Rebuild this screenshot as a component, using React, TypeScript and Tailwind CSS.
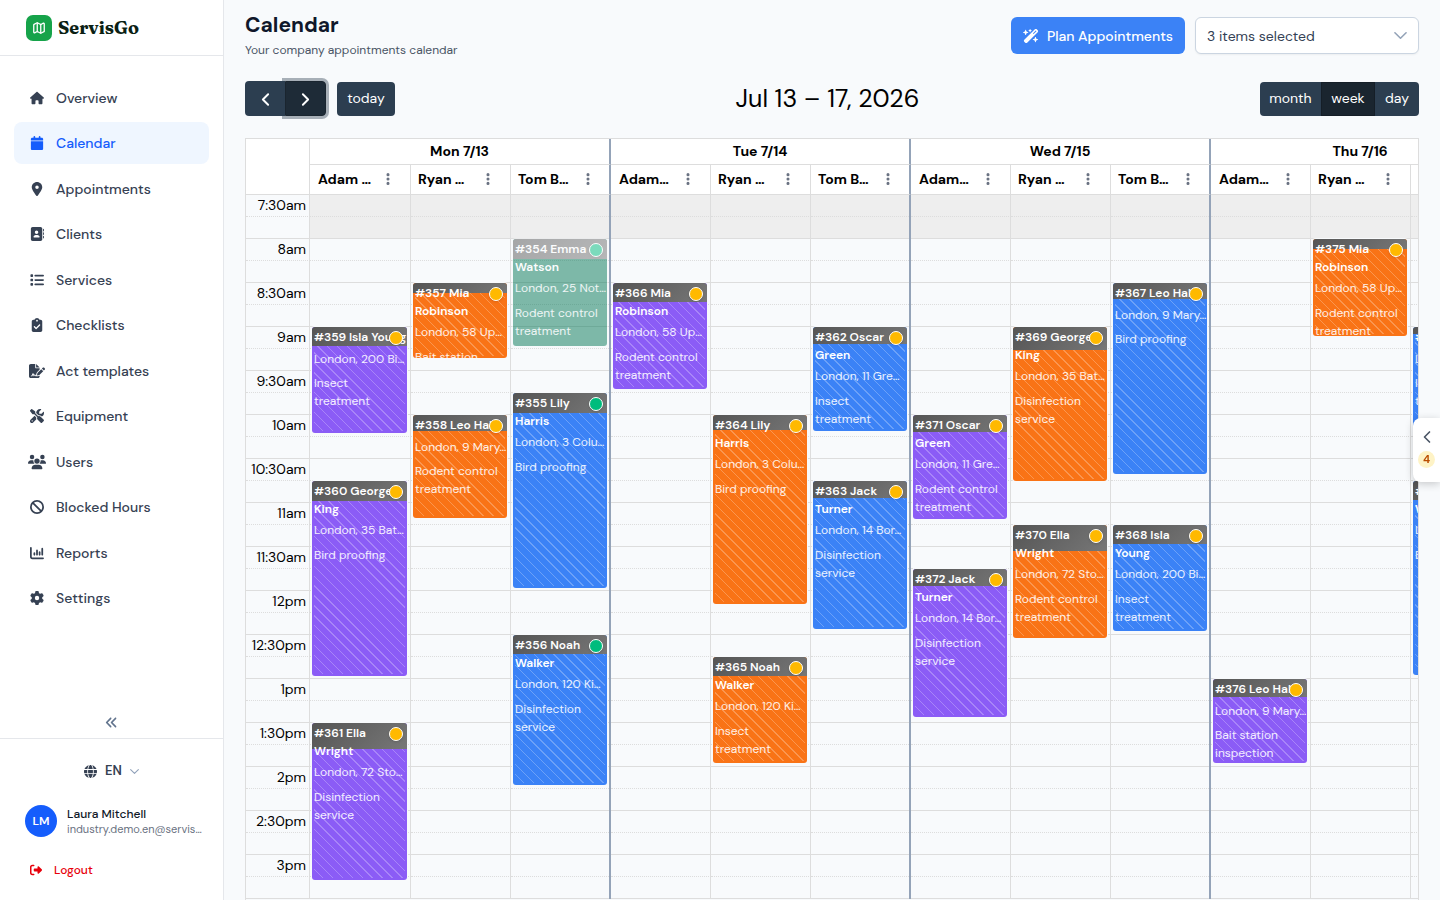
import type { IconType } from 'react-icons';
import {
  FaAddressBook,
  FaAnglesLeft,
  FaBan,
  FaCalendar,
  FaChartColumn,
  FaClipboardCheck,
  FaEllipsisVertical,
  FaFileSignature,
  FaGear,
  FaGlobe,
  FaHouse,
  FaList,
  FaLocationDot,
  FaRightFromBracket,
  FaScrewdriverWrench,
  FaUsers,
  FaWandMagicSparkles,
} from 'react-icons/fa6';
import { ChevronLeft, ChevronRight, Map as MapIcon } from 'lucide-react';

const NAV: { label: string; icon: IconType; size?: number; active?: boolean }[] = [
  { label: 'Overview', icon: FaHouse },
  { label: 'Calendar', icon: FaCalendar, active: true },
  { label: 'Appointments', icon: FaLocationDot },
  { label: 'Clients', icon: FaAddressBook },
  { label: 'Services', icon: FaList },
  { label: 'Checklists', icon: FaClipboardCheck },
  { label: 'Act templates', icon: FaFileSignature, size: 16 },
  { label: 'Equipment', icon: FaScrewdriverWrench },
  { label: 'Users', icon: FaUsers, size: 18 },
  { label: 'Blocked Hours', icon: FaBan },
  { label: 'Reports', icon: FaChartColumn },
  { label: 'Settings', icon: FaGear },
];

const DAYS = ['Mon 7/13', 'Tue 7/14', 'Wed 7/15', 'Thu 7/16'];

const HOURS = [
  '7:30am', '8am', '8:30am', '9am', '9:30am', '10am', '10:30am', '11am', '11:30am',
  '12pm', '12:30pm', '1pm', '1:30pm', '2pm', '2:30pm', '3pm',
];

const STAFF = ['Ryan …', 'Tom B…'];

type Tone = 'purple' | 'orange' | 'blue' | 'done';

interface Appointment {
  title: string;
  address: string;
  service: string;
  tone: Tone;
  /** Offset from the first slot, in pixels (22px per 15 minutes). */
  top: number;
  height: number;
  /** Height of the travel-time band at the top of the card. */
  travel: number;
  confirmed?: boolean;
}

const COLUMNS: Appointment[][] = [
  [
    { title: '#359 Isla Young', address: 'London, 200 Bi…', service: 'Insect\ntreatment', tone: 'purple', top: 132, height: 106, travel: 19 },
    { title: '#360 George\nKing', address: 'London, 35 Bat…', service: 'Bird proofing', tone: 'purple', top: 286, height: 195, travel: 20 },
    { title: '#361 Ella\nWright', address: 'London, 72 Sto…', service: 'Disinfection\nservice', tone: 'purple', top: 528, height: 157, travel: 26 },
  ],
  [
    { title: '#357 Mia\nRobinson', address: 'London, 58 Up…', service: 'Bait station\ninspection', tone: 'orange', top: 88, height: 75, travel: 10 },
    { title: '#358 Leo Hall', address: 'London, 9 Mary…', service: 'Rodent control\ntreatment', tone: 'orange', top: 220, height: 103, travel: 16 },
  ],
  [
    { title: '#354 Emma\nWatson', address: 'London, 25 Not…', service: 'Rodent control\ntreatment', tone: 'done', top: 44, height: 107, travel: 20, confirmed: true },
    { title: '#355 Lily\nHarris', address: 'London, 3 Colu…', service: 'Bird proofing', tone: 'blue', top: 198, height: 195, travel: 20, confirmed: true },
    { title: '#356 Noah\nWalker', address: 'London, 120 Ki…', service: 'Disinfection\nservice', tone: 'blue', top: 440, height: 150, travel: 19, confirmed: true },
  ],
  [
    { title: '#366 Mia\nRobinson', address: 'London, 58 Up…', service: 'Rodent control\ntreatment', tone: 'purple', top: 88, height: 106, travel: 19 },
  ],
  [
    { title: '#364 Lily\nHarris', address: 'London, 3 Colu…', service: 'Bird proofing', tone: 'orange', top: 220, height: 189, travel: 15 },
    { title: '#365 Noah\nWalker', address: 'London, 120 Ki…', service: 'Insect\ntreatment', tone: 'orange', top: 462, height: 106, travel: 19 },
  ],
  [
    { title: '#362 Oscar\nGreen', address: 'London, 11 Gre…', service: 'Insect\ntreatment', tone: 'blue', top: 132, height: 104, travel: 17 },
    { title: '#363 Jack\nTurner', address: 'London, 14 Bor…', service: 'Disinfection\nservice', tone: 'blue', top: 286, height: 148, travel: 17 },
  ],
  [
    { title: '#371 Oscar\nGreen', address: 'London, 11 Gre…', service: 'Rodent control\ntreatment', tone: 'purple', top: 220, height: 104, travel: 17 },
    { title: '#372 Jack\nTurner', address: 'London, 14 Bor…', service: 'Disinfection\nservice', tone: 'purple', top: 374, height: 148, travel: 17 },
  ],
  [
    { title: '#369 George\nKing', address: 'London, 35 Bat…', service: 'Disinfection\nservice', tone: 'orange', top: 132, height: 154, travel: 23 },
    { title: '#370 Ella\nWright', address: 'London, 72 Sto…', service: 'Rodent control\ntreatment', tone: 'orange', top: 330, height: 113, travel: 26 },
  ],
  [
    { title: '#367 Leo Hall', address: 'London, 9 Mary…', service: 'Bird proofing', tone: 'blue', top: 88, height: 191, travel: 16 },
    { title: '#368 Isla\nYoung', address: 'London, 200 Bi…', service: 'Insect\ntreatment', tone: 'blue', top: 330, height: 106, travel: 19 },
  ],
  [
    { title: '#376 Leo Hall', address: 'London, 9 Mary…', service: 'Bait station\ninspection', tone: 'purple', top: 484, height: 84, travel: 18 },
  ],
  [
    { title: '#375 Mia\nRobinson', address: 'London, 58 Up…', service: 'Rodent control\ntreatment', tone: 'orange', top: 44, height: 97, travel: 10 },
  ],
  [
    { title: '#373 Isla Young', address: 'London, 200 Bi…', service: 'Insect\ntreatment', tone: 'blue', top: 132, height: 106, travel: 7 },
    { title: '#374 Ella\nWright', address: 'London, 72 Sto…', service: 'Bird proofing', tone: 'blue', top: 286, height: 194, travel: 19 },
  ],
];

const TONES: Record<Tone, string> = {
  purple: 'bg-[#8b5cf6]',
  orange: 'bg-[#f97316]',
  blue: 'bg-[#3b82f6]',
  done: 'bg-[#047857] opacity-50',
};

function ThinChevron({ size, className }: { size: number; className?: string }) {
  return (
    <svg width={size} height={size} viewBox="0 0 14 14" fill="none" stroke="currentColor" strokeWidth="1.7" strokeLinecap="round" strokeLinejoin="round" aria-hidden="true" className={className}>
      <path d="M1 4l6 6 6-6" />
    </svg>
  );
}

function Sidebar() {
  return (
    <aside className="flex w-56 shrink-0 flex-col border-r border-gray-200 bg-white">
      <div className="flex h-14 shrink-0 items-center gap-1.5 border-b border-gray-200 pl-[26px]">
        <span className="flex size-[26px] items-center justify-center rounded-[7px] bg-[#16a34a] text-white">
          <MapIcon size={14} strokeWidth={2.2} />
        </span>
        <span className="font-['Fraunces','Liberation_Serif',serif] text-lg leading-7 font-bold text-[#0b1f14]">ServisGo</span>
      </div>
      <nav className="flex-1 px-3.5 pt-[21px]">
        <ul className="flex h-[542px] flex-col justify-between">
          {NAV.map(({ label, icon: Icon, size = 14, active }) => (
            <li key={label}>
              <a
                href="#"
                aria-current={active ? 'page' : undefined}
                className={
                  active
                    ? 'flex h-[42px] items-center gap-2.5 rounded-lg bg-[#eff6ff] px-3.5 text-sm font-medium text-[#155dfc]'
                    : 'flex h-[42px] items-center gap-2.5 rounded-lg px-3.5 text-sm font-medium text-[#364153]'
                }
              >
                <span className="flex w-[18px] justify-center">
                  <Icon size={size} />
                </span>
                {label}
              </a>
            </li>
          ))}
        </ul>
      </nav>
      <div className="flex h-8 shrink-0 items-center justify-center border-b border-gray-200">
        <button type="button" aria-label="Collapse sidebar" className="text-[#62748e]">
          <FaAnglesLeft size={13} />
        </button>
      </div>
      <div className="flex h-[161px] shrink-0 flex-col">
        <button type="button" className="mt-5 flex h-6 items-center justify-center gap-2 text-[13px] font-semibold text-[#364153]">
          <FaGlobe size={13} />
          EN
          <ThinChevron size={9} className="text-[#90a1b9]" />
        </button>
        <div className="mt-[22px] flex items-center gap-2.5 pr-5 pl-[25px]">
          <span className="flex size-8 shrink-0 items-center justify-center rounded-full bg-[#155dfc] text-xs font-semibold text-white">
            LM
          </span>
          <div className="min-w-0">
            <p className="text-xs leading-4 font-medium text-[#101828]">Laura Mitchell</p>
            <p className="text-[11px] leading-[15px] whitespace-nowrap text-[#6a7282]">industry.demo.en@servis…</p>
          </div>
        </div>
        <button type="button" className="mt-[21px] flex h-6 items-center gap-3 pl-[30px] text-xs font-medium text-[#e7000b]">
          <FaRightFromBracket size={12} />
          Logout
        </button>
      </div>
    </aside>
  );
}

function PageHeader() {
  return (
    <header className="flex items-start justify-between pt-[11px]">
      <div>
        <h1 className="text-[21px] leading-7 font-bold text-[#0f172a]">Calendar</h1>
        <p className="mt-0.5 text-xs leading-[18px] text-[#4a5565]">Your company appointments calendar</p>
      </div>
      <div className="mt-1.5 flex gap-2.5">
        <button type="button" className="flex h-[37px] items-center gap-2 rounded-md bg-[#3b82f6] px-3 text-sm font-medium text-white">
          <FaWandMagicSparkles size={16} />
          Plan Appointments
        </button>
        <div className="relative w-56">
          <select
            aria-label="Staff filter"
            className="h-[37px] w-full appearance-none rounded-md border border-[#cbd5e1] bg-white px-[11px] text-sm text-[#334155] shadow-xs"
          >
            <option>3 items selected</option>
          </select>
          <ThinChevron size={13} className="pointer-events-none absolute top-3 right-3 text-[#94a3b8]" />
        </div>
      </div>
    </header>
  );
}

function Toolbar() {
  return (
    <div className="mt-[22px] flex h-[35px] items-end justify-between text-sm text-white">
      <div className="flex items-end">
        <button type="button" aria-label="Previous" className="flex h-[35px] w-10 items-center justify-center rounded-l bg-[#2c3e50] pt-0.5">
          <ChevronLeft size={21} strokeWidth={2.2} />
        </button>
        <button
          type="button"
          aria-label="Next"
          className="flex h-[35px] w-[41px] items-center justify-center rounded-r border border-[#1a252f] bg-[#1e2b37] pt-0.5 shadow-[0_0_0_3px_rgba(44,62,80,0.4)]"
        >
          <ChevronRight size={21} strokeWidth={2.2} />
        </button>
        <button type="button" className="ml-[11px] h-[34px] w-[58px] rounded bg-[#2c3e50] pb-0.5">
          today
        </button>
      </div>
      <h2 className="text-[25px] leading-[34px] font-normal text-black">Jul 13 – 17, 2026</h2>
      <div className="flex h-[34px]">
        <button type="button" className="w-[61px] rounded-l bg-[#2c3e50] pb-0.5">month</button>
        <button type="button" className="w-[54px] border border-[#151e27] bg-[#1a252f] pb-0.5">week</button>
        <button type="button" className="w-11 rounded-r bg-[#2c3e50] pb-0.5">day</button>
      </div>
    </div>
  );
}

function AppointmentCard({ item }: { item: Appointment }) {
  const singleLineTitle = !item.title.includes('\n');
  return (
    <article
      className={`absolute right-1 left-0.5 overflow-hidden rounded-[3px] text-xs leading-[18px] text-white shadow-[0_0_0_1px_#f8fafc] ${TONES[item.tone]}`}
      style={{ top: item.top, height: item.height }}
    >
      {item.tone !== 'done' && (
        <div className="absolute inset-x-0.5 top-0 bottom-0.5 bg-[repeating-linear-gradient(45deg,transparent_0px,transparent_6px,rgba(255,255,255,0.25)_6px,rgba(255,255,255,0.25)_7px)]" />
      )}
      <div
        className="absolute inset-x-0 top-0 bg-[linear-gradient(135deg,#555555,#777777)]"
        style={{ height: item.travel }}
      />
      <div className="relative px-0.5 pt-px whitespace-pre">
        <h3 className="font-semibold">{item.title}</h3>
        <p className={singleLineTitle ? 'mt-1 text-white/90' : 'mt-[3px] text-white/90'}>{item.address}</p>
        <p className={singleLineTitle ? 'mt-1.5 text-white/90' : 'mt-[7px] text-white/90'}>{item.service}</p>
      </div>
      <span
        className={
          item.confirmed
            ? 'absolute top-1 right-1 size-3.5 rounded-full border border-white bg-[#00bc7d] shadow-sm'
            : 'absolute top-1 right-1 size-3.5 rounded-full border border-white bg-[#ffb900] shadow-sm'
        }
      />
    </article>
  );
}

function borderRight(column: number) {
  return column % 3 === 2 ? 'border-r-2 border-r-[#94a3b8]' : 'border-r border-r-[#dddddd]';
}

function Schedule() {
  return (
    <section className="mt-[22px] min-h-0 flex-1 overflow-hidden border border-b-0 border-[#dddddd]">
      <div className="relative w-max">
        <table className="w-[1265px] table-fixed border-separate border-spacing-0">
          <colgroup>
            <col className="w-16" />
            {COLUMNS.map((_, i) => (
              <col key={i} className={i === 0 ? 'w-[101px]' : 'w-[100px]'} />
            ))}
          </colgroup>
          <thead className="bg-white text-sm font-bold text-black">
            <tr className="h-[26px]">
              <td rowSpan={2} className="border-r border-b border-[#dddddd]" />
              {DAYS.map((day) => (
                <th key={day} colSpan={3} className="border-r-2 border-b border-r-[#94a3b8] border-b-[#dddddd] p-0 align-top leading-6">
                  {day}
                </th>
              ))}
            </tr>
            <tr className="h-[30px]">
              {COLUMNS.map((_, i) => (
                <th key={i} className={`border-b border-b-[#dddddd] p-0 align-top ${borderRight(i)}`}>
                  <div
                    className={
                      i % 3 === 0
                        ? 'flex h-7 items-center justify-between pr-3.5 pl-2'
                        : i % 3 === 1
                          ? 'flex h-7 items-center justify-between pr-3.5 pl-[7px]'
                          : 'flex h-7 items-center justify-between pr-[13px] pl-[7px]'
                    }
                  >
                    <span className="leading-5">{i === 0 ? 'Adam …' : i % 3 === 0 ? 'Adam…' : STAFF[(i % 3) - 1]}</span>
                    <button type="button" aria-label="Column options" className="flex w-4 justify-center text-[#6a7282]">
                      <FaEllipsisVertical size={14} />
                    </button>
                  </div>
                </th>
              ))}
            </tr>
          </thead>
          <tbody>
            {HOURS.flatMap((hour, row) =>
              [0, 1].map((half) => {
                const line = half === 0 ? 'border-b border-dotted border-b-[#dddddd]' : 'border-b border-b-[#dddddd]';
                return (
                  <tr key={`${hour}-${half}`} className="h-[22px]">
                    <td className={`p-0 pr-1 text-right align-top text-sm leading-5 text-black ${line}`}>
                      {half === 0 ? hour : null}
                    </td>
                    {COLUMNS.map((_, i) => (
                      <td key={i} className={row === 0 ? `bg-[#eeeeee] p-0 ${line}` : `p-0 ${line}`} />
                    ))}
                  </tr>
                );
              }),
            )}
          </tbody>
        </table>
        <div className="absolute inset-x-0 top-14 bottom-0 flex">
          <div className="w-16 shrink-0 border-r border-[#dddddd]" />
          {COLUMNS.map((items, i) => (
            <div key={i} className={`shrink-0 ${i === 0 ? 'w-[101px]' : 'w-[100px]'} ${borderRight(i)}`}>
              <div className={i % 3 === 2 ? 'relative -mr-px h-full' : 'relative h-full'}>
                <div className="absolute inset-y-0 right-[-1px] left-0">
                  {items.map((item) => (
                    <AppointmentCard key={item.title} item={item} />
                  ))}
                </div>
              </div>
            </div>
          ))}
        </div>
      </div>
    </section>
  );
}

function PlanDrawerTab() {
  return (
    <button
      type="button"
      aria-label="Open unplanned appointments"
      className="fixed top-[418px] right-0 flex h-16 w-[27px] flex-col items-center justify-start gap-[5px] rounded-l-lg bg-white pt-2.5 text-[#4a5565] shadow-[0_2px_8px_rgba(0,0,0,0.2)]"
    >
      <ChevronLeft size={20} strokeWidth={2} className="-my-px" />
      <span className="flex size-[17px] items-center justify-center rounded-full bg-[#fef3c6] text-[11px] font-bold text-[#bb4d00]">4</span>
    </button>
  );
}

export default function App() {
  return (
    <div className="flex h-screen overflow-hidden bg-[#f8fafc] font-['DM_Sans','Inter',sans-serif]">
      <Sidebar />
      <main className="flex min-w-0 flex-1 flex-col pr-[21px] pl-[21px]">
        <PageHeader />
        <Toolbar />
        <Schedule />
      </main>
      <PlanDrawerTab />
    </div>
  );
}
